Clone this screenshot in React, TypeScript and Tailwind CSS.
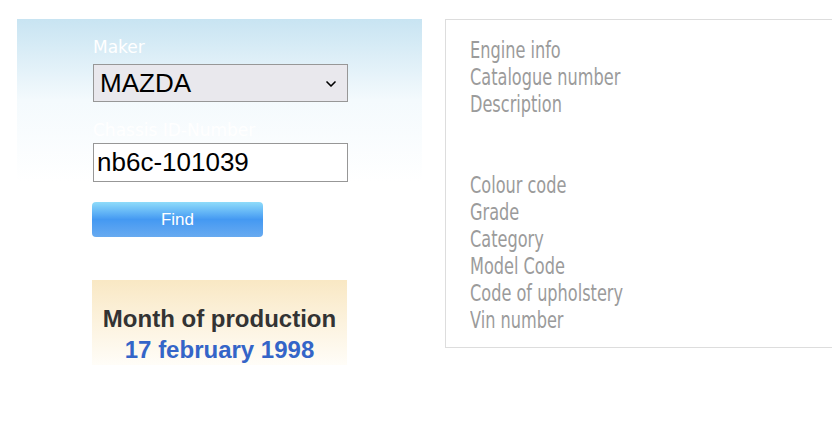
import { ChevronDown } from 'lucide-react'

const engineFields = ['Engine info', 'Catalogue number', 'Description']
const carFields = ['Colour code', 'Grade', 'Category', 'Model Code', 'Code of upholstery', 'Vin number']

function Field({ label }: { label: string }) {
  return <div className="origin-left scale-x-[0.78] whitespace-nowrap">{label}</div>
}

export default function App() {
  return (
    <div className="w-[832px] h-[424px] bg-white overflow-hidden flex items-start pt-[19px] font-['Liberation_Sans',Arial,sans-serif]">
      <div className="ml-[17px] w-[405px] shrink-0">
        <div className="h-[163px] bg-gradient-to-b from-[#c8e4f2] via-[#f4fafd] to-white pl-[76px] pt-[16px]">
          <div className="text-[17px] leading-[24px] text-white font-['DejaVu_Sans',sans-serif]">Maker</div>
          <div className="relative w-[255px] h-[38px] border border-[#979797] bg-[#e9e8ed] mt-[5px] flex items-center pl-[6px]">
            <span className="text-[26px] text-black">MAZDA</span>
            <ChevronDown className="absolute right-[8px] top-[11px] w-[16px] h-[16px] text-black" strokeWidth={2.5} />
          </div>
          <div className="text-[17px] leading-[20px] text-white mt-[18px] font-['DejaVu_Sans',sans-serif]">Chassis ID-Number</div>
          <div className="w-[255px] h-[39px] border border-[#979797] bg-white mt-[3px] flex items-center pl-[3px]">
            <span className="text-[26px] text-black">nb6c-101039</span>
          </div>
        </div>
        <div className="pl-[75px]">
          <button
            type="button"
            className="mt-[20px] w-[171px] h-[35px] rounded-[4px] bg-gradient-to-b from-[#8fdcfa] via-[#4499f2] to-[#67aaf0] text-white text-[17px] flex items-center justify-center"
          >
            Find
          </button>
          <div className="mt-[43px] w-[255px] h-[85px] bg-gradient-to-b from-[#f9e8c4] to-[#fffdf8] flex flex-col items-center pt-[23px] font-bold text-[24px] leading-[31px] whitespace-nowrap">
            <span className="text-[#333333]">Month of production</span>
            <span className="text-[#3465c8]">17 february 1998</span>
          </div>
        </div>
      </div>
      <div className="ml-[23px] w-[420px] h-[329px] shrink-0 border border-[#dddddd] border-r-0 pl-[24px] pt-[17px] text-[#9b9b9b] text-[23px] leading-[27px] font-['DejaVu_Sans_Condensed','DejaVu_Sans',sans-serif]">
        {engineFields.map((f) => (
          <Field key={f} label={f} />
        ))}
        <div className="h-[54px]" />
        {carFields.map((f) => (
          <Field key={f} label={f} />
        ))}
      </div>
    </div>
  )
}
